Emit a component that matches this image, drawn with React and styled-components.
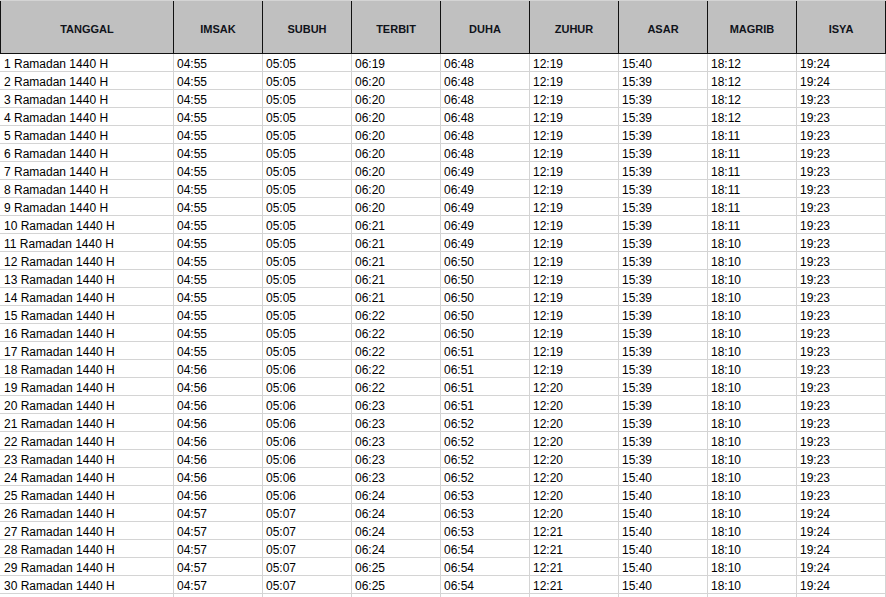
import React from 'react'
import styled, { createGlobalStyle } from 'styled-components'

const GlobalStyle = createGlobalStyle`
  html, body {
    margin: 0;
    padding: 0;
    background: #fff;
    overflow: hidden;
  }
  body {
    font-family: "Liberation Sans", Arial, sans-serif;
  }
`

const COLUMNS = ['TANGGAL', 'IMSAK', 'SUBUH', 'TERBIT', 'DUHA', 'ZUHUR', 'ASAR', 'MAGRIB', 'ISYA']

const times = [
  '04:55 05:05 06:19 06:48 12:19 15:40 18:12 19:24',
  '04:55 05:05 06:20 06:48 12:19 15:39 18:12 19:24',
  '04:55 05:05 06:20 06:48 12:19 15:39 18:12 19:23',
  '04:55 05:05 06:20 06:48 12:19 15:39 18:12 19:23',
  '04:55 05:05 06:20 06:48 12:19 15:39 18:11 19:23',
  '04:55 05:05 06:20 06:48 12:19 15:39 18:11 19:23',
  '04:55 05:05 06:20 06:49 12:19 15:39 18:11 19:23',
  '04:55 05:05 06:20 06:49 12:19 15:39 18:11 19:23',
  '04:55 05:05 06:20 06:49 12:19 15:39 18:11 19:23',
  '04:55 05:05 06:21 06:49 12:19 15:39 18:11 19:23',
  '04:55 05:05 06:21 06:49 12:19 15:39 18:10 19:23',
  '04:55 05:05 06:21 06:50 12:19 15:39 18:10 19:23',
  '04:55 05:05 06:21 06:50 12:19 15:39 18:10 19:23',
  '04:55 05:05 06:21 06:50 12:19 15:39 18:10 19:23',
  '04:55 05:05 06:22 06:50 12:19 15:39 18:10 19:23',
  '04:55 05:05 06:22 06:50 12:19 15:39 18:10 19:23',
  '04:55 05:05 06:22 06:51 12:19 15:39 18:10 19:23',
  '04:56 05:06 06:22 06:51 12:19 15:39 18:10 19:23',
  '04:56 05:06 06:22 06:51 12:20 15:39 18:10 19:23',
  '04:56 05:06 06:23 06:51 12:20 15:39 18:10 19:23',
  '04:56 05:06 06:23 06:52 12:20 15:39 18:10 19:23',
  '04:56 05:06 06:23 06:52 12:20 15:39 18:10 19:23',
  '04:56 05:06 06:23 06:52 12:20 15:39 18:10 19:23',
  '04:56 05:06 06:23 06:52 12:20 15:40 18:10 19:23',
  '04:56 05:06 06:24 06:53 12:20 15:40 18:10 19:23',
  '04:57 05:07 06:24 06:53 12:20 15:40 18:10 19:24',
  '04:57 05:07 06:24 06:53 12:21 15:40 18:10 19:24',
  '04:57 05:07 06:24 06:54 12:21 15:40 18:10 19:24',
  '04:57 05:07 06:25 06:54 12:21 15:40 18:10 19:24',
  '04:57 05:07 06:25 06:54 12:21 15:40 18:10 19:24',
]

const rows = times.map((t, i) => [`${i + 1} Ramadan 1440 H`, ...t.split(' ')])

const App = () => (
  <>
    <GlobalStyle />
    <Sheet>
      {COLUMNS.map((name, i) => (
        <HeaderCell key={name} first={i === 0}>{name}</HeaderCell>
      ))}
      {rows.map((row, r) =>
        row.map((value, c) => (
          <Cell key={`${r}-${c}`} first={c === 0}>{value}</Cell>
        ))
      )}
      {COLUMNS.map(name => (
        <Filler key={`f-${name}`} />
      ))}
    </Sheet>
  </>
)

export default App

const Sheet = styled.div`
  display: grid;
  grid-template-columns: 174px repeat(8, 89px);
  width: 886px;
  border-top: 1px solid #d4d4d4;
`

const HeaderCell = styled.div`
  box-sizing: border-box;
  height: 53px;
  display: flex;
  align-items: center;
  justify-content: center;
  padding-top: 3px;
  background: #c0c0c0;
  border-right: 1px solid #111;
  border-bottom: 1px solid #111;
  border-left: ${props => (props.first ? '1px solid #111' : 'none')};
  font-size: 11px;
  font-weight: bold;
  color: #10131a;
`

const Cell = styled.div`
  box-sizing: border-box;
  height: 18px;
  padding: 3px 0 0 ${props => (props.first ? '4px' : '3px')};
  line-height: 14px;
  font-size: 12px;
  color: #000;
  white-space: nowrap;
  border-right: 1px solid #d4d4d4;
  border-bottom: 1px solid #d4d4d4;
`

const Filler = styled.div`
  height: 4px;
  border-right: 1px solid #d4d4d4;
`
